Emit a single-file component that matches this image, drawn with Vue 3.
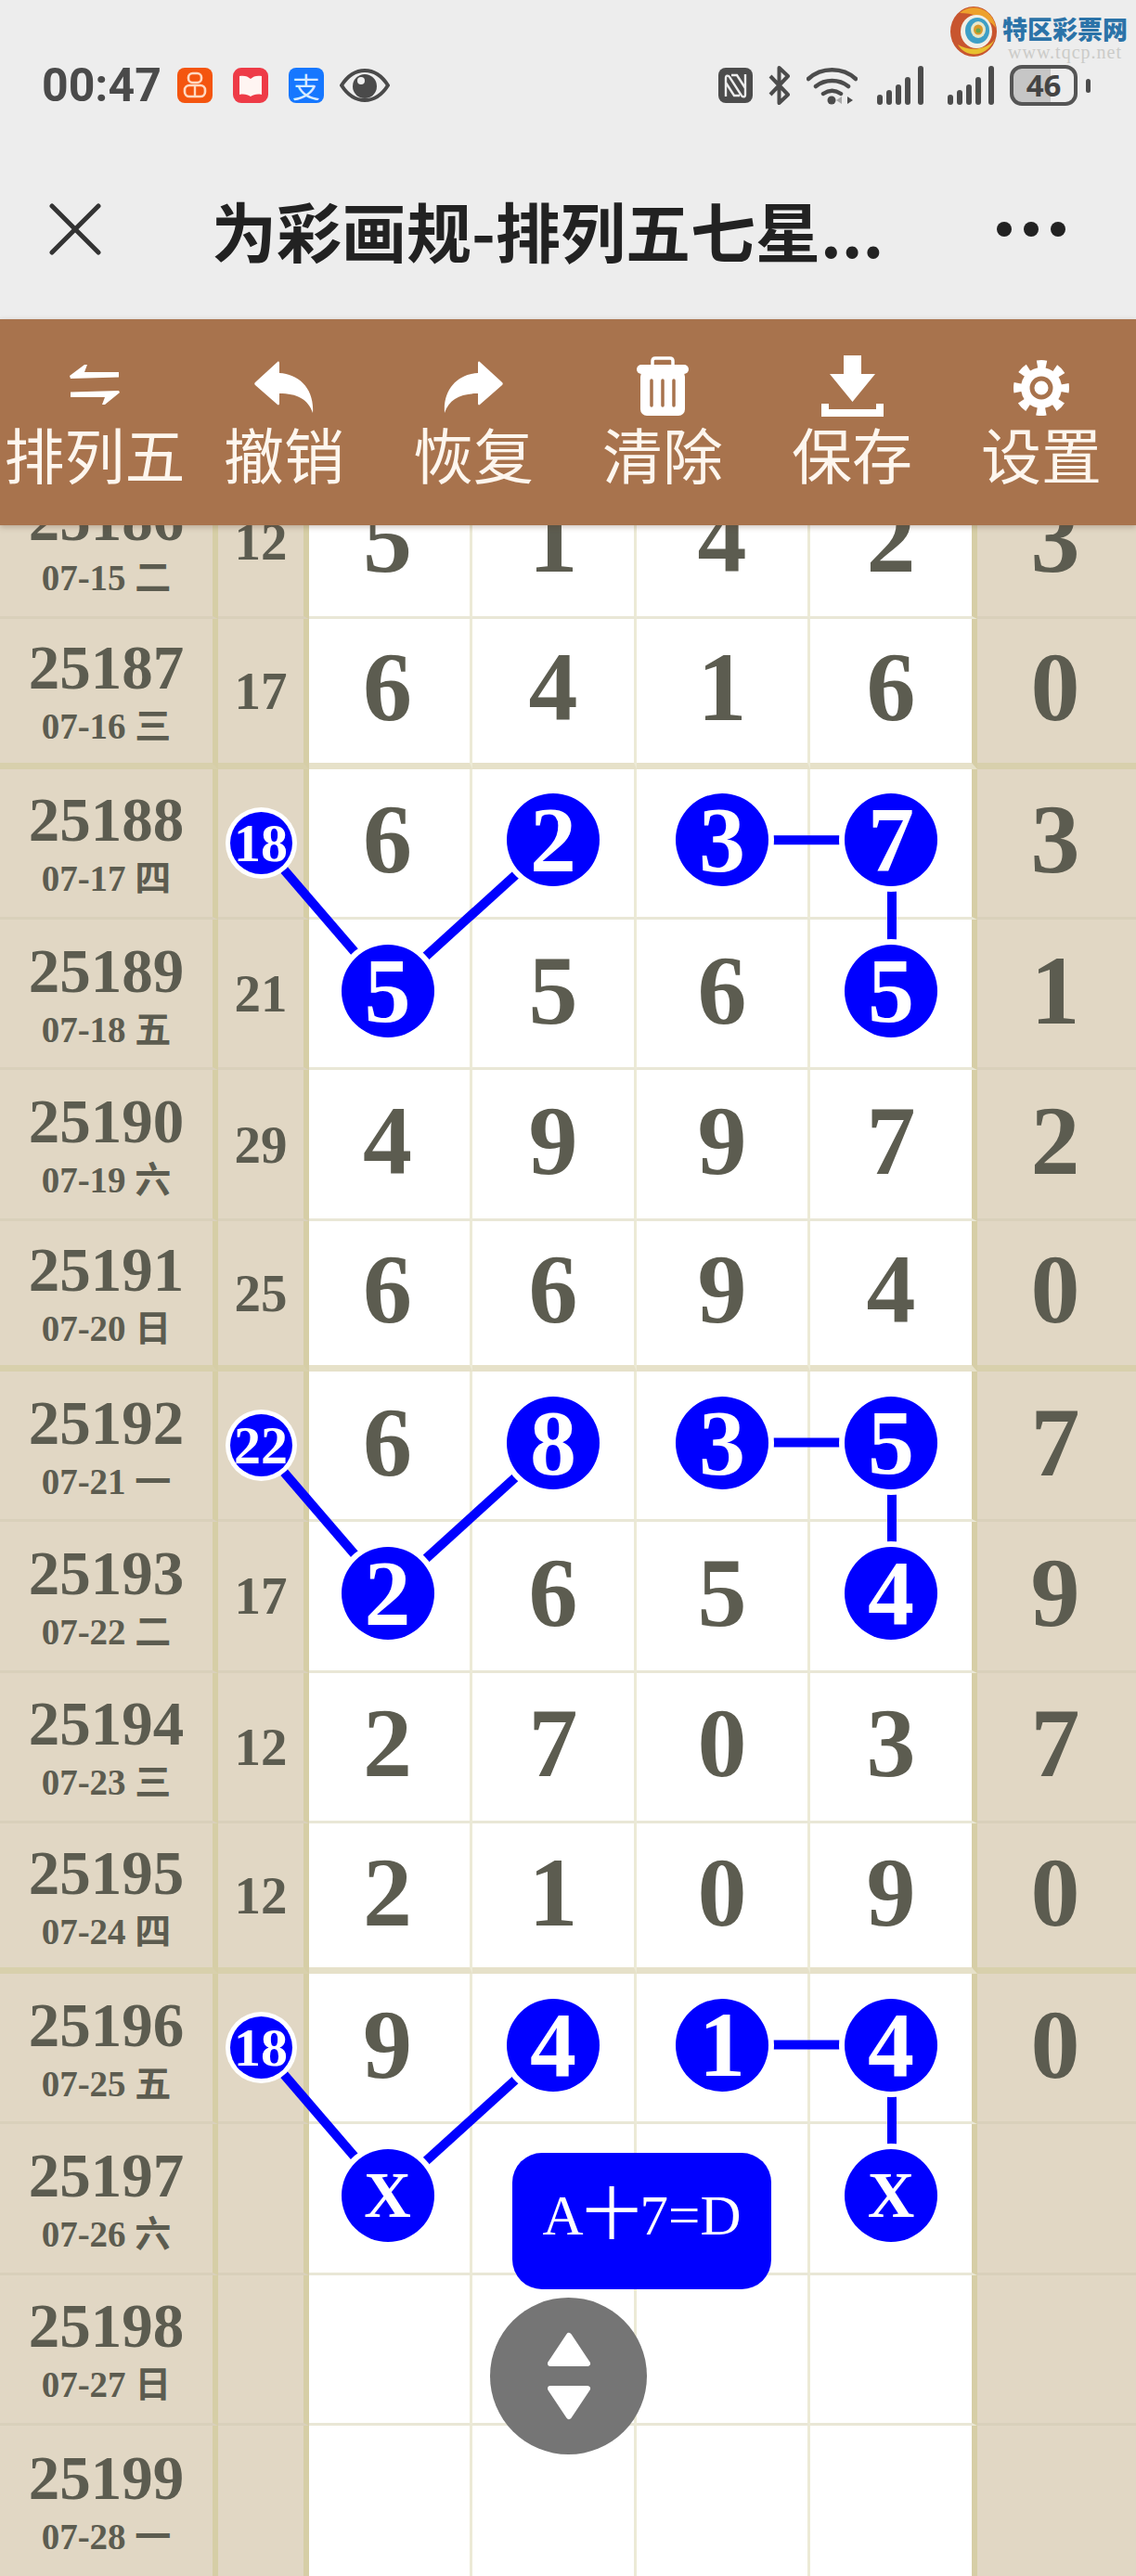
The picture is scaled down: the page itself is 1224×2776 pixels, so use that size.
<template>
  <div class="page">
    <!-- Barre d'etat -->
    <div class="status">
      <span class="time">00:47</span>
      <svg class="app app--first" viewBox="0 0 38 38">
        <rect width="38" height="38" rx="8" fill="#f4550f" />
        <rect x="12" y="6" width="14" height="10" rx="4.5" fill="none" stroke="#ffd9c2" stroke-width="2.6" />
        <rect x="8" y="19" width="22" height="12" rx="5" fill="none" stroke="#ffd9c2" stroke-width="2.6" />
        <path d="M19 19v12" stroke="#ffd9c2" stroke-width="2.4" />
      </svg>
      <svg class="app" viewBox="0 0 38 38">
        <rect width="38" height="38" rx="9" fill="#ee3b47" />
        <path d="M7 9c5-1 9 0 12 3 3-3 7-4 12-3v20c-5-1-9 0-12 2-3-2-7-3-12-2z" fill="#fff5f2" />
      </svg>
      <div class="app app--pay">支</div>
      <svg class="eye" viewBox="0 0 54 38">
        <path d="M2 19C9 8 18 3 27 3s18 5 25 16c-7 11-16 16-25 16S9 30 2 19z" fill="none" stroke="#4a4a4a" stroke-width="4" />
        <circle cx="27" cy="20" r="13" fill="#4a4a4a" />
        <circle cx="23" cy="14" r="4" fill="#ededed" />
      </svg>

      <div class="status__right">
        <svg class="nfc" viewBox="0 0 37 38">
          <rect width="37" height="38" rx="8" fill="#4c4c4c" />
          <path d="M8 31V11c0-3 3-3 4-1l13 20c1 2 4 2 4-1V7M14 8h6l9 14M8 16l9 14h6" fill="none" stroke="#ededed" stroke-width="2.4" />
        </svg>
        <svg class="bt" viewBox="0 0 25 42">
          <path d="M3 11l19 20-9.500 9V2l9.500 9L3 31" fill="none" stroke="#4c4c4c" stroke-width="4" stroke-linejoin="round" />
        </svg>
        <svg class="wifi" viewBox="0 0 55 42">
          <path d="M2 14C16 1 39 1 53 14M10 22c10-8 25-8 35 0M18 30c6-4 13-4 19 0" fill="none" stroke="#4c4c4c" stroke-width="4.500" stroke-linecap="round" />
          <circle cx="27" cy="37" r="4.500" fill="#4c4c4c" />
          <path d="M38 33l-6 4 6 4z" fill="#aaa" />
          <path d="M44 33l6 4-6 4z" fill="#4c4c4c" />
        </svg>
        <svg class="signal" viewBox="0 0 52 42">
          <rect v-for="bar in bars" :key="bar.x" :x="bar.x" :y="42 - bar.h" width="6" :height="bar.h" rx="3" fill="#4c4c4c" />
        </svg>
        <svg class="signal signal--2" viewBox="0 0 52 42">
          <rect v-for="bar in bars" :key="bar.x" :x="bar.x" :y="42 - bar.h" width="6" :height="bar.h" rx="3" fill="#4c4c4c" />
        </svg>
        <div class="battery"><span>46</span></div>
        <div class="battery__nub"></div>
      </div>
    </div>

    <!-- Filigrane du site -->
    <div class="mark">
      <svg class="mark__logo" viewBox="0 0 50 56">
        <ellipse cx="25" cy="28" rx="25" ry="27" fill="#c8552f" />
        <path d="M10 8C22-3 46 2 49 24 40 12 22 8 10 8z" fill="#eda12c" />
        <path d="M8 42c8 14 30 16 40-6-8 12-28 14-40 6z" fill="#e8c02f" />
        <ellipse cx="28" cy="28" rx="17" ry="18" fill="#f1efe6" />
        <ellipse cx="29" cy="27" rx="13" ry="14" fill="#3e9fc6" />
        <ellipse cx="30" cy="26" rx="8" ry="9" fill="#e9e7c8" />
        <ellipse cx="30" cy="26" rx="5" ry="5.500" fill="#d99a2b" />
        <circle cx="30" cy="27" r="2.500" fill="#6aa84f" />
      </svg>
      <div class="mark__text">
        <div class="mark__name">特区彩票网</div>
        <div class="mark__url">www.tqcp.net</div>
      </div>
    </div>

    <!-- Navigation -->
    <div class="nav">
      <svg class="nav__close" viewBox="0 0 56 56">
        <path d="M3 3l50 50M53 3L3 53" stroke="#333" stroke-width="5" stroke-linecap="round" />
      </svg>
      <div class="nav__title">为彩画规-排列五七星...</div>
      <div class="nav__dots"><i></i><i></i><i></i></div>
    </div>

    <!-- Barre d'outils -->
    <div class="tools">
      <div class="tool">
        <svg class="tool__icon" width="60" height="66" viewBox="0 0 60 66">
          <path d="M3 22L19 10h3l-3 8h37v5.500L4 25zM57 40L41 53h-3l3-8H4v-5.500L56 38z" fill="#fff" />
        </svg>
        <span>排列五</span>
      </div>
      <div class="tool">
        <svg class="tool__icon" width="64" height="66" viewBox="0 0 64 66">
          <path d="M1 29L25 7c1-1 2 0 2 1v11c21 1 38 17 36 43-5-15-17-21-36-21v11c0 1-1 2-2 1L1 32c-1-1-1-2 0-3z" fill="#fff" />
        </svg>
        <span>撤销</span>
      </div>
      <div class="tool">
        <svg class="tool__icon" width="64" height="66" viewBox="0 0 64 66">
          <path d="M63 29L39 7c-1-1-2 0-2 1v11C16 20-1 36 1 62c5-15 17-21 36-21v11c0 1 1 2 2 1l24-21c1-1 1-2 0-3z" fill="#fff" />
        </svg>
        <span>恢复</span>
      </div>
      <div class="tool">
        <svg class="tool__icon" width="56" height="66" viewBox="0 0 56 66">
          <path d="M17 10V6c0-2 1-3 3-3h16c2 0 3 1 3 3v4" fill="none" stroke="#fff" stroke-width="3.500" />
          <rect y="10" width="56" height="10" rx="5" fill="#fff" />
          <rect x="4" y="16" width="48" height="49" rx="7" fill="#fff" />
          <path d="M16 27v27M28 27v27M40 27v27" stroke="#a8734d" stroke-width="3.500" stroke-linecap="round" />
        </svg>
        <span>清除</span>
      </div>
      <div class="tool">
        <svg class="tool__icon" width="67" height="66" viewBox="0 0 67 66">
          <path d="M24 0h19v20h15L33.500 50 9 20h15z" fill="#fff" />
          <path d="M4 52v10h59V52" fill="none" stroke="#fff" stroke-width="8" />
        </svg>
        <span>保存</span>
      </div>
      <div class="tool">
        <svg class="tool__icon" width="60" height="66" viewBox="0 0 60 66">
          <circle cx="30" cy="35" r="22" fill="#fff" />
          <circle cx="30" cy="35" r="25" fill="none" stroke="#fff" stroke-width="10" stroke-dasharray="9.800 9.800" stroke-dashoffset="5" />
          <circle cx="30" cy="35" r="10" fill="#fff" stroke="#a8734d" stroke-width="5" />
        </svg>
        <span>设置</span>
      </div>
    </div>

    <!-- Tableau des tirages -->
    <div class="table">
      <svg class="links" width="1224" height="2272">
        <line
          v-for="(l, i) in links"
          :key="i"
          :x1="l.x1" :y1="l.y1" :x2="l.x2" :y2="l.y2"
          stroke="#0000ff" stroke-width="10"
        />
      </svg>

      <div
        v-for="(row, r) in rows"
        :key="row.no"
        class="row"
        :class="{ 'row--end': r % 4 === 1 && r < 13, 'row--last': r === 13 }"
      >
        <div class="cell cell--side cell--period">
          <div class="period">{{ row.no }}</div>
          <div class="date">{{ row.date }}</div>
        </div>
        <div
          v-for="(val, c) in row.vals"
          :key="c"
          class="cell"
          :class="{
            'cell--side': c === 0 || c === 5,
            'cell--sum': c === 0,
            'cell--num': c > 0,
            'cell--a': c === 1,
            'cell--d': c === 4,
            'cell--e': c === 5,
          }"
        >
          <span v-if="isHit(r, c)" class="ball" :class="{ 'ball--sm': c === 0, 'ball--x': val === 'X' }">{{ val }}</span>
          <template v-else>{{ val }}</template>
        </div>
      </div>
    </div>

    <!-- Boutons flottants -->
    <div class="badge">A十7=D</div>
    <div class="updown">
      <svg width="48" height="95" viewBox="0 0 48 95">
        <path d="M24 4L44 34H4z" fill="#fff" stroke="#fff" stroke-width="6" stroke-linejoin="round" />
        <path d="M24 91L44 61H4z" fill="#fff" stroke="#fff" stroke-width="6" stroke-linejoin="round" />
      </svg>
    </div>
  </div>
</template>

<script setup>
import { computed } from 'vue'

const bars = [
  { x: 1, h: 11 },
  { x: 11, h: 16 },
  { x: 21, h: 22 },
  { x: 31, h: 30 },
  { x: 45, h: 42 },
]

const rows = [
  { no: 25186, date: '07-15 二', vals: [12, 5, 1, 4, 2, 3] },
  { no: 25187, date: '07-16 三', vals: [17, 6, 4, 1, 6, 0] },
  { no: 25188, date: '07-17 四', vals: [18, 6, 2, 3, 7, 3] },
  { no: 25189, date: '07-18 五', vals: [21, 5, 5, 6, 5, 1] },
  { no: 25190, date: '07-19 六', vals: [29, 4, 9, 9, 7, 2] },
  { no: 25191, date: '07-20 日', vals: [25, 6, 6, 9, 4, 0] },
  { no: 25192, date: '07-21 一', vals: [22, 6, 8, 3, 5, 7] },
  { no: 25193, date: '07-22 二', vals: [17, 2, 6, 5, 4, 9] },
  { no: 25194, date: '07-23 三', vals: [12, 2, 7, 0, 3, 7] },
  { no: 25195, date: '07-24 四', vals: [12, 2, 1, 0, 9, 0] },
  { no: 25196, date: '07-25 五', vals: [18, 9, 4, 1, 4, 0] },
  { no: 25197, date: '07-26 六', vals: ['', 'X', '', '', 'X', ''] },
  { no: 25198, date: '07-27 日', vals: ['', '', '', '', '', ''] },
  { no: 25199, date: '07-28 一', vals: ['', '', '', '', '', ''] },
]

// premiere ligne de chaque groupe de deux tirages relies
const groups = [2, 6, 10]

function isHit(r, c) {
  return groups.some((g) => {
    if (r === g) return c === 0 || c === 2 || c === 3 || c === 4
    if (r === g + 1) return c === 1 || c === 4
    return false
  })
}

const colX = [281, 418, 597, 779, 961]
const rowY = (r) => r * 162.3 + 76.6

const links = computed(() =>
  groups.flatMap((g) => [
    { x1: colX[0], y1: rowY(g) + 3, x2: colX[1], y2: rowY(g + 1) },
    { x1: colX[1], y1: rowY(g + 1), x2: colX[2], y2: rowY(g) },
    { x1: colX[3], y1: rowY(g), x2: colX[4], y2: rowY(g) },
    { x1: colX[4], y1: rowY(g), x2: colX[4], y2: rowY(g + 1) },
  ])
)
</script>

<style scoped>
.page {
  position: relative;
  width: 1224px;
  height: 2776px;
  overflow: hidden;
  background: #ededed;
}

/* Barre d'etat */
.status {
  display: flex;
  align-items: center;
  box-sizing: border-box;
  height: 130px;
  padding: 54px 49px 0 45px;
}

.time {
  font-family: Roboto, sans-serif;
  font-size: 50px;
  font-weight: 700;
  color: #4a4a4a;
  line-height: 1;
}

.app {
  display: block;
  width: 38px;
  height: 38px;
  margin-left: 22px;
}

.app--first {
  margin-left: 17px;
}

.app--pay {
  border-radius: 8px;
  background: #1677ff;
  color: #d8ebff;
  font-family: "Noto Sans CJK SC", sans-serif;
  font-size: 30px;
  line-height: 38px;
  text-align: center;
}

.eye {
  width: 54px;
  height: 38px;
  margin-left: 17px;
}

.status__right {
  display: flex;
  align-items: center;
  margin-left: auto;
}

.nfc {
  width: 37px;
  height: 38px;
}

.bt {
  width: 25px;
  height: 42px;
  margin-left: 16px;
}

.wifi {
  width: 55px;
  height: 42px;
  margin-left: 17px;
}

.signal {
  width: 52px;
  height: 42px;
  margin-left: 20px;
}

.signal--2 {
  margin-left: 24px;
}

.battery {
  box-sizing: border-box;
  width: 73px;
  height: 44px;
  margin-left: 16px;
  border: 4px solid #555;
  border-radius: 13px;
  background: linear-gradient(to right, #c6c6c6 62%, #ededed 62%);
  text-align: center;
  font-family: "Open Sans", sans-serif;
  font-size: 33px;
  font-weight: 700;
  line-height: 36px;
  color: #444;
}

.battery__nub {
  width: 5px;
  height: 15px;
  margin-left: 9px;
  border-radius: 3px;
  background: #4c4c4c;
}

/* Filigrane */
.mark {
  position: absolute;
  top: 6px;
  right: 9px;
  display: flex;
  align-items: flex-start;
  gap: 6px;
}

.mark__logo {
  width: 50px;
  height: 56px;
}

.mark__text {
  width: 135px;
  padding-top: 9px;
  text-align: center;
}

.mark__name {
  font-family: "Noto Sans CJK SC", sans-serif;
  font-size: 27px;
  font-weight: 900;
  line-height: 32px;
  color: #2b73a8;
}

.mark__url {
  font-family: "Liberation Serif", serif;
  font-size: 20px;
  letter-spacing: 1px;
  line-height: 18px;
  color: #cbcbc8;
}

/* Navigation */
.nav {
  display: flex;
  align-items: center;
  box-sizing: border-box;
  height: 214px;
  padding: 20px 76px 0 53px;
}

.nav__close {
  width: 56px;
  height: 56px;
}

.nav__title {
  margin-left: 119px;
  font-family: "Noto Sans CJK SC", sans-serif;
  font-size: 70px;
  font-weight: 700;
  color: #222;
  white-space: nowrap;
}

.nav__dots {
  display: flex;
  gap: 13px;
  margin-left: auto;
}

.nav__dots i {
  width: 16px;
  height: 16px;
  border-radius: 50%;
  background: #222;
}

/* Barre d'outils */
.tools {
  position: relative;
  z-index: 5;
  display: grid;
  grid-template-columns: repeat(6, 204px);
  box-sizing: border-box;
  height: 222px;
  padding-top: 39px;
  background: #a8734d;
  box-shadow: 0 2px 6px rgba(90, 60, 40, 0.3);
}

.tool {
  display: flex;
  flex-direction: column;
  align-items: center;
  font-family: "Noto Sans CJK SC", sans-serif;
  font-size: 65px;
  line-height: 78px;
  color: #fdf6ee;
}

.tool__icon {
  display: block;
  height: 66px;
}

/* Tableau */
.table {
  position: relative;
  margin-top: -61.8px;
}

.links {
  position: absolute;
  top: 0;
  left: 0;
  z-index: 1;
}

.row {
  display: grid;
  grid-template-columns: 235px 98px 176px 177px 187px 180px 171px;
  height: 162.3px;
}

.cell {
  display: flex;
  flex-direction: column;
  align-items: center;
  justify-content: center;
  box-sizing: border-box;
  border-right: 3px solid #ecead6;
  border-bottom: 3px solid #e9e7d6;
  background: #fff;
  font-family: "Liberation Serif", serif;
  font-weight: 700;
  color: #5c5c50;
}

.cell--num {
  padding-bottom: 6px;
  font-size: 106px;
  line-height: 1;
}

.cell--side {
  border-right: 6px solid #d6cea6;
  border-bottom-color: #d9d0bb;
  background: #e1d7c4;
}

.cell--period {
  padding-top: 14px;
}

.cell--sum {
  font-size: 57px;
}

.cell--a {
  padding-right: 4px;
}

.cell--d {
  border-right: 6px solid #d6cea6;
}

.cell--e {
  padding-right: 3px;
  border-right: 0;
}

.row--end .cell {
  border-bottom: 7px solid #e6e1c9;
}

.row--end .cell--side {
  border-bottom-color: #d8d0ac;
}

.row--last .cell {
  border-bottom: 0;
}

.period {
  font-size: 67px;
  line-height: 63px;
}

.date {
  font-family: "Liberation Serif", "Noto Sans CJK SC", serif;
  font-size: 39px;
  line-height: 63px;
}

.ball {
  position: relative;
  z-index: 2;
  display: flex;
  align-items: center;
  justify-content: center;
  width: 100px;
  height: 100px;
  border-radius: 50%;
  background: #0000ff;
  box-shadow: 0 0 0 6px #fff;
  color: #fff;
  font-size: 100px;
}

.ball--sm {
  width: 67px;
  height: 67px;
  box-shadow: 0 0 0 5px #fff;
  font-size: 58px;
}

.ball--x {
  font-size: 70px;
}

/* Boutons flottants */
.badge {
  position: absolute;
  top: 2320px;
  left: 552px;
  z-index: 3;
  box-sizing: border-box;
  width: 279px;
  height: 147px;
  padding-bottom: 12px;
  border-radius: 32px;
  background: #0000ff;
  color: #fff;
  font-family: "Liberation Serif", "Noto Sans CJK SC", serif;
  font-size: 61px;
  line-height: 135px;
  text-align: center;
}

.updown {
  position: absolute;
  top: 2476px;
  left: 528px;
  z-index: 3;
  display: flex;
  align-items: center;
  justify-content: center;
  width: 169px;
  height: 169px;
  border-radius: 50%;
  background: #757575;
}
</style>

<style>
html,
body {
  margin: 0;
  background: #fff;
}
</style>
